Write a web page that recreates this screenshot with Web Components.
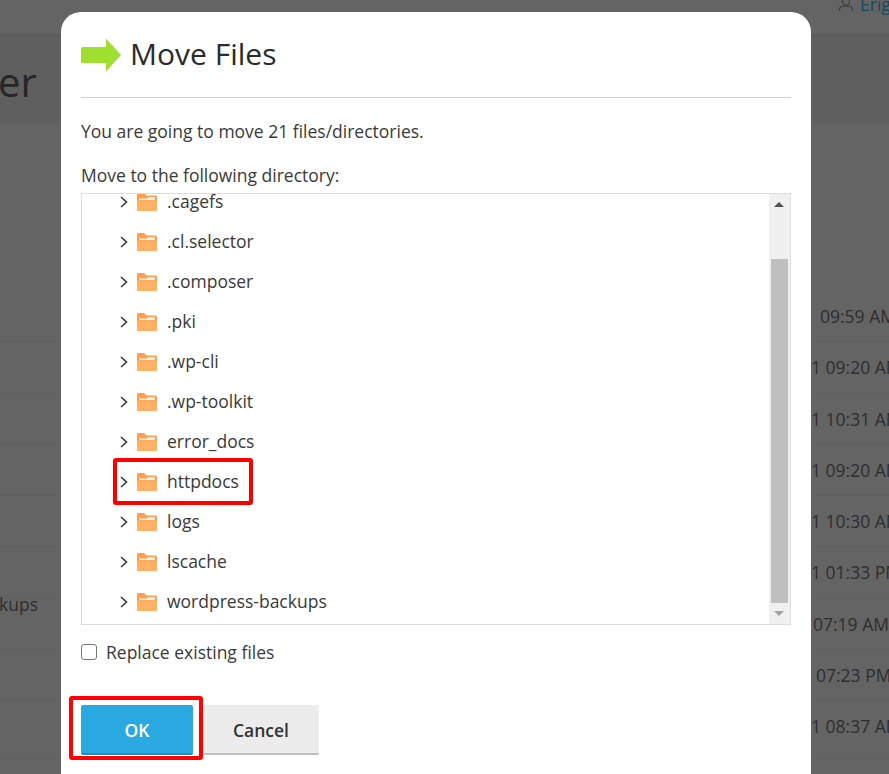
<!doctype html>
<html><head><meta charset="utf-8">
<style>
html,body{margin:0;padding:0;height:100%;overflow:hidden;background:#646464}
body{font-family:"Open Sans",sans-serif}
</style></head><body>
<template id="t-bg"><style>
:host{display:flex;flex-direction:column;width:889px;height:774px;overflow:hidden;background:#646464;color:#2b2b2b;font-size:17.500px}
.top{height:34px;flex:none;border-bottom:2px solid #5c5c5c;display:flex;justify-content:flex-end;overflow:hidden}
.user{display:flex;gap:6px;margin-top:-7px;white-space:nowrap;width:51px;color:#17495f;font-size:17.500px;line-height:22px;overflow:hidden}
.user svg{flex:none;margin-top:5px}
.title{height:88px;flex:none;font-size:40px;line-height:91px;text-indent:-2px;color:#262626;background:#5f5f5f;border-bottom:1px solid #626262;white-space:nowrap}
.rows{padding-top:166px;display:flex;flex-direction:column}
</style>
<div class="top"><div class="user"><svg width="16" height="14" viewBox="0 0 16 14" fill="none" stroke="#3f3f3f" stroke-width="1.2"><circle cx="8" cy="3.5" r="3.5"/><path d="M1.500 13v-1.500c0-2 2-3 4-3.300h5c2 .3 4 1.300 4 3.300V13"/></svg><span>Erigo</span></div></div>
<div class="title">er</div>
<div class="rows"><slot></slot></div></template>

<template id="t-row"><style>
:host{display:grid;grid-template-columns:40px 1fr;height:51.300px;box-sizing:border-box;border-bottom:1px solid #606060;line-height:50px;white-space:nowrap;color:#2e2e2e;font-size:17.500px}
.l{overflow:visible}
::slotted([slot=left]){display:block;margin-top:-20px;margin-left:-1px}
.r{padding-left:var(--x,0);overflow:hidden}
</style><div class="l"><slot name="left"></slot></div><div class="r"><slot></slot></div></template>

<template id="t-modal"><style>
:host{display:flex;flex-direction:column;position:absolute;left:61px;top:12px;width:750px;height:790px;box-sizing:border-box;padding:0 20px;background:#fff;border-radius:20px;color:#3a3a3a;font-size:17.500px;line-height:24px}
header{display:flex;align-items:center;gap:10px;height:86px;flex:none;box-sizing:border-box;border-bottom:1px solid #d3d3d3;padding-bottom:2px}
svg{flex:none;margin-top:2px}
h1{margin:0 0 0 -1px;font-weight:400;font-size:30px;line-height:40px;color:#2b2b2b}
.msg{margin:21px 0 0}
.lbl{margin:20px 0 6px}
.foot{display:flex;gap:10px;margin-top:42px;position:relative}
</style>
<header><svg width="40" height="34" viewBox="0 0 40 34"><path d="M1.500 9H25V0.500L40 17 25 33.500V25H1.500A1.500 1.500 0 0 1 0 23.500V10.500A1.500 1.500 0 0 1 1.500 9Z" fill="#9fdf2f"/></svg><h1>Move Files</h1></header>
<p class="msg">You are going to move 21 files/directories.</p>
<p class="lbl">Move to the following directory:</p>
<slot name="tree"></slot>
<slot name="check"></slot>
<div class="foot"><slot name="buttons"></slot></div></template>

<template id="t-tree"><style>
:host{display:flex;height:432px;box-sizing:border-box;border:1px solid #dcdcdc;overflow:hidden}
.list{flex:1;overflow:hidden;padding-left:30px}
.in{margin-top:-13px}
.bar{width:21px;flex:none;background:#f0f0f0;position:relative}
.up,.down{width:0;height:0;border-left:5px solid transparent;border-right:5px solid transparent;position:absolute;left:5px}
.up{top:8px;border-bottom:5px solid #505050}
.down{bottom:8px;border-top:5px solid #a3a3a3}
.thumb{position:absolute;left:2px;top:65px;width:17px;height:344px;background:#bfbfbf}
</style><div class="list"><div class="in"><slot></slot></div></div>
<div class="bar"><span class="up"></span><span class="thumb"></span><span class="down"></span></div></template>

<template id="t-item"><style>
:host{display:flex;align-items:center;height:40px;position:relative;color:#3a3a3a;font-size:17.500px;white-space:nowrap}
.c{margin-left:8px;width:17px;flex:none;display:flex;margin-top:2px}
.f{width:20px;height:18px;flex:none;margin-right:10px;margin-top:2px}
.mark{display:none;position:absolute;left:1px;top:-3px;width:140px;height:47px;box-sizing:border-box;border:4px solid #f00;border-radius:3px}
:host([marked]) .mark{display:block}
</style><span class="c"><svg width="8" height="12" viewBox="0 0 8 12" fill="none" stroke="#333" stroke-width="1.500"><path d="M1 1l5.500 5L1 11"/></svg></span>
<svg class="f" viewBox="0 0 22 18" preserveAspectRatio="none"><path d="M1.500 0H8l2 2.500h10.500A1.500 1.500 0 0 1 22 4v12.500a1.500 1.500 0 0 1-1.500 1.500h-19A1.500 1.500 0 0 1 0 16.500V1.500A1.500 1.500 0 0 1 1.500 0Z" fill="#ff9c50"/><path d="M2.500 5.500H11l1.500-1.500h7v3H2.500Z" fill="#fff2e4"/><path d="M0 9L2 7.500h18L22 9v7.500a1.500 1.500 0 0 1-1.500 1.500h-19A1.500 1.500 0 0 1 0 16.500Z" fill="#ffb266"/></svg>
<span><slot></slot></span><span class="mark"></span></template>

<template id="t-check"><style>
:host{display:flex;align-items:center;gap:9px;margin-top:16px;height:22px}
.b{width:16px;height:16px;box-sizing:border-box;border:1px solid #767676;border-radius:3px;background:#fff;flex:none}
</style><span class="b"></span><span><slot></slot></span></template>

<template id="t-btn"><style>
:host{display:flex;align-items:center;justify-content:center;height:50px;box-sizing:border-box;border-radius:2px;font-size:17.500px;font-weight:600;position:relative;background:#ececec;color:#333;width:116px;border-bottom:2px solid #bdbdbd;padding-top:2px}
:host([primary]){background:#29a9e0;color:#fff;width:112px;border-bottom-color:#1f8fc0}
.mark{display:none;position:absolute;left:-12px;top:-9px;width:134px;height:64px;box-sizing:border-box;border:4px solid #f00;border-radius:3px}
:host([marked]) .mark{display:block}
</style><slot></slot><span class="mark"></span></template>

<x-page>
<x-row style="--x:780px">09:59 AM</x-row>
<x-row style="--x:771px">1 09:20 AM</x-row>
<x-row style="--x:771px">1 10:31 AM</x-row>
<x-row style="--x:771px">1 09:20 AM</x-row>
<x-row style="--x:771px">1 10:30 AM</x-row>
<x-row style="--x:771px">1 01:33 PM</x-row>
<x-row style="--x:773px"><span slot="left">kups</span>07:19 AM</x-row>
<x-row style="--x:776px">07:23 PM</x-row>
<x-row style="--x:771px;height:58px">1 08:37 AM</x-row>
</x-page>
<x-modal>
<x-tree slot="tree">
<x-item>.cagefs</x-item><x-item>.cl.selector</x-item><x-item>.composer</x-item><x-item>.pki</x-item><x-item>.wp-cli</x-item><x-item>.wp-toolkit</x-item><x-item>error_docs</x-item><x-item marked>httpdocs</x-item><x-item>logs</x-item><x-item>lscache</x-item><x-item>wordpress-backups</x-item>
</x-tree>
<x-check slot="check">Replace existing files</x-check>
<x-btn slot="buttons" primary marked>OK</x-btn>
<x-btn slot="buttons">Cancel</x-btn>
</x-modal>
<script>
const map={'x-page':'t-bg','x-row':'t-row','x-modal':'t-modal','x-tree':'t-tree','x-item':'t-item','x-check':'t-check','x-btn':'t-btn'};
for(const [n,t] of Object.entries(map)){
 customElements.define(n,class extends HTMLElement{constructor(){super();this.attachShadow({mode:'open'}).appendChild(document.getElementById(t).content.cloneNode(true));}});
}
</script>
</body></html>
